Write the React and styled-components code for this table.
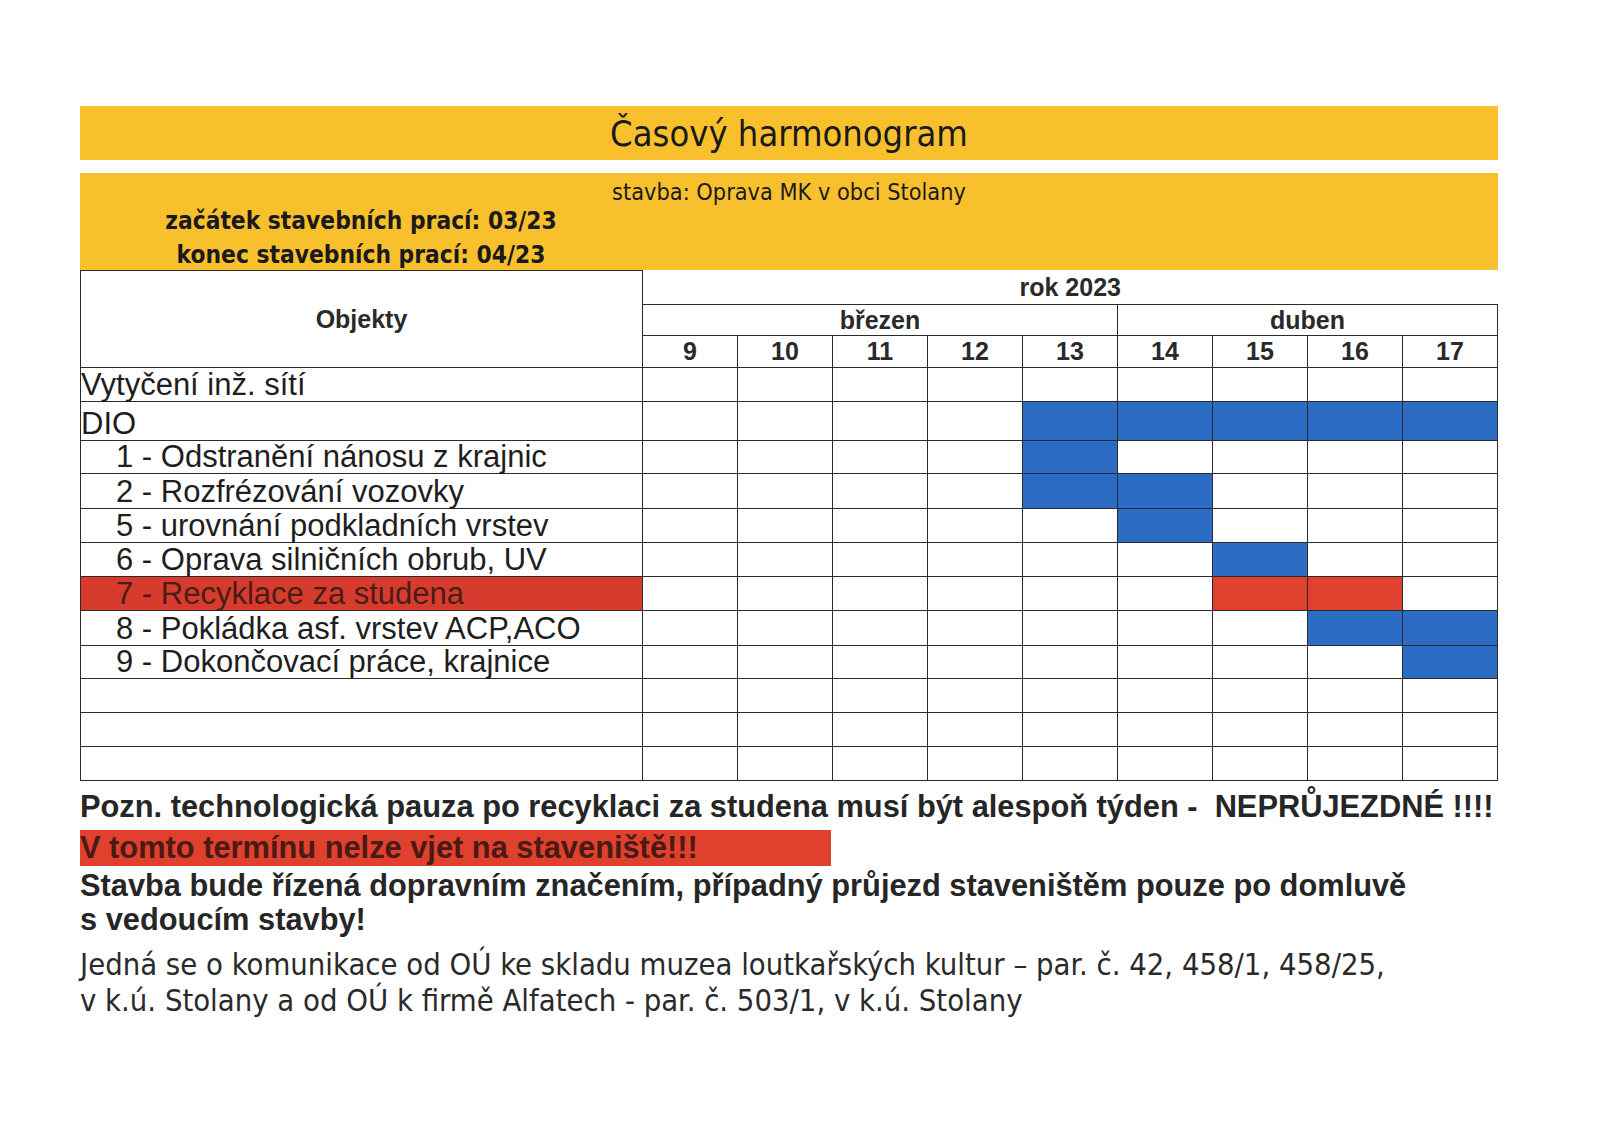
import React from 'react';
import styled, {createGlobalStyle} from 'styled-components';

const GlobalStyle = createGlobalStyle`
    body {
        margin: 0;
        background: #fff;
        color: #1e1e1e;
    }
`;

const YELLOW = '#f9c02e';
const BLUE = '#2b6cc4';
const RED = '#e0402e';
const LINE = '#2a2a2a';

const Sheet = styled.div`
    width: 1418px;
    padding: 106px 0 0 80px;
    display: flex;
    flex-direction: column;
`;

const TitleBand = styled.div`
    height: 54px;
    background: ${YELLOW};
    display: flex;
    justify-content: center;
    align-items: center;
    font-family: "DejaVu Sans Condensed", "DejaVu Sans", sans-serif;
    font-stretch: condensed;
    font-size: 36px;
    color: #1a1a1a;
    margin-bottom: 13px;
`;

const InfoBand = styled.div`
    height: 97px;
    background: ${YELLOW};
    display: grid;
    grid-template-columns: 562px 1fr;
    grid-template-rows: 31px 1fr;
    font-family: "DejaVu Sans Condensed", "DejaVu Sans", sans-serif;
    font-stretch: condensed;
    color: #1a1a1a;
`;

const Stavba = styled.div`
    grid-column: 1 / -1;
    text-align: center;
    font-size: 23.3px;
    line-height: 24px;
    padding-top: 7px;
`;

const Dates = styled.div`
    display: flex;
    flex-direction: column;
    align-items: center;
    font-weight: bold;
    font-size: 24.3px;
    line-height: 34px;
`;

const Grid = styled.table`
    width: 1418px;
    border-collapse: collapse;
    table-layout: fixed;
    font-family: "Liberation Sans", Arial, sans-serif;
`;

const Head = styled.th`
    border: 1.5px solid ${LINE};
    font-weight: bold;
    font-size: 25px;
    line-height: 26px;
    color: #2a2a2a;
    padding: 0;
    height: ${p => p.$h}px;
    ${p => p.$open && `border-top: none; border-right: none;`}
`;

/* row height given as the full drawn height; td height here excludes padding and border */
const Name = styled.td`
    border: 1.5px solid ${LINE};
    height: ${p => p.$h - 4}px;
    padding: 0 0 3px ${p => (p.$sub ? 35 : 0)}px;
    font-size: 31px;
    line-height: 26px;
    vertical-align: bottom;
    white-space: nowrap;
    overflow: visible;
    color: ${p => (p.$hot ? '#4a1d16' : '#1e1e1e')};
    background: ${p => (p.$hot ? '#d73b2e' : 'transparent')};
`;

const Cell = styled.td`
    border: 1.5px solid ${LINE};
    padding: 0;
    background: ${p => (p.$fill === 'b' ? BLUE : p.$fill === 'r' ? RED : 'transparent')};
`;

const Notes = styled.div`
    display: flex;
    flex-direction: column;
    align-items: flex-start;
    padding-top: 9px;
`;

const BoldNote = styled.div`
    font-family: "Liberation Sans", Arial, sans-serif;
    font-weight: bold;
    font-size: 30.8px;
    line-height: 34px;
    color: #262626;
    white-space: pre;
`;

const Warning = styled(BoldNote)`
    width: 751px;
    height: 36px;
    line-height: 36px;
    background: ${RED};
    color: #4a1a14;
    margin: 6px 0 3px;
`;

const PlainNote = styled.div`
    font-family: "DejaVu Sans Condensed", "DejaVu Sans", sans-serif;
    font-stretch: condensed;
    font-size: 30.7px;
    line-height: 36px;
    color: #2a2a2a;
    white-space: nowrap;
    margin-top: ${p => p.$gap || 0}px;
`;

const weeks = [9, 10, 11, 12, 13, 14, 15, 16, 17];

const rows = [
    {name: 'Vytyčení inž. sítí', h: 34, bars: {}},
    {name: 'DIO', h: 39, bars: {13: 'b', 14: 'b', 15: 'b', 16: 'b', 17: 'b'}},
    {name: '1 - Odstranění nánosu z krajnic', sub: true, h: 33, bars: {13: 'b'}},
    {name: '2 - Rozfrézování vozovky', sub: true, h: 35, bars: {13: 'b', 14: 'b'}},
    {name: '5 - urovnání podkladních vrstev', sub: true, h: 34, bars: {14: 'b'}},
    {name: '6 - Oprava silničních obrub, UV', sub: true, h: 34, bars: {15: 'b'}},
    {name: '7 - Recyklace za studena', sub: true, hot: true, h: 34, bars: {15: 'r', 16: 'r'}},
    {name: '8 - Pokládka asf. vrstev ACP,ACO', sub: true, h: 35, bars: {16: 'b', 17: 'b'}},
    {name: '9 - Dokončovací práce, krajnice', sub: true, h: 33, bars: {17: 'b'}},
    {name: '', h: 34, bars: {}},
    {name: '', h: 34, bars: {}},
    {name: '', h: 34, bars: {}},
];

function App() {
    return (
        <>
            <GlobalStyle/>
            <Sheet>
                <TitleBand>Časový harmonogram</TitleBand>
                <InfoBand>
                    <Stavba>stavba: Oprava MK v obci Stolany</Stavba>
                    <Dates>
                        <span>začátek stavebních prací: 03/23</span>
                        <span>konec stavebních prací: 04/23</span>
                    </Dates>
                </InfoBand>
                <Grid>
                    <colgroup>
                        <col style={{width: 562}}/>
                        {weeks.map(w => <col key={w}/>)}
                    </colgroup>
                    <thead>
                        <tr>
                            <Head rowSpan={3}>Objekty</Head>
                            <Head colSpan={9} $h={33} $open>rok 2023</Head>
                        </tr>
                        <tr>
                            <Head colSpan={5} $h={30}>březen</Head>
                            <Head colSpan={4} $h={30}>duben</Head>
                        </tr>
                        <tr>
                            {weeks.map(w => <Head key={w} $h={31}>{w}</Head>)}
                        </tr>
                    </thead>
                    <tbody>
                        {rows.map((r, i) => (
                            <tr key={i}>
                                <Name $h={r.h} $sub={r.sub} $hot={r.hot}>{r.name}</Name>
                                {weeks.map(w => <Cell key={w} $fill={r.bars[w]}/>)}
                            </tr>
                        ))}
                    </tbody>
                </Grid>
                <Notes>
                    <BoldNote>Pozn. technologická pauza po recyklaci za studena musí být alespoň týden -  NEPRŮJEZDNÉ !!!!</BoldNote>
                    <Warning>V tomto termínu nelze vjet na staveniště!!!</Warning>
                    <BoldNote>Stavba bude řízená dopravním značením, případný průjezd staveništěm pouze po domluvě</BoldNote>
                    <BoldNote>s vedoucím stavby!</BoldNote>
                    <PlainNote $gap={10}>Jedná se o komunikace od OÚ ke skladu muzea loutkařských kultur – par. č. 42, 458/1, 458/25,</PlainNote>
                    <PlainNote>v k.ú. Stolany a od OÚ k firmě Alfatech - par. č. 503/1, v k.ú. Stolany</PlainNote>
                </Notes>
            </Sheet>
        </>
    );
}

export default App;
